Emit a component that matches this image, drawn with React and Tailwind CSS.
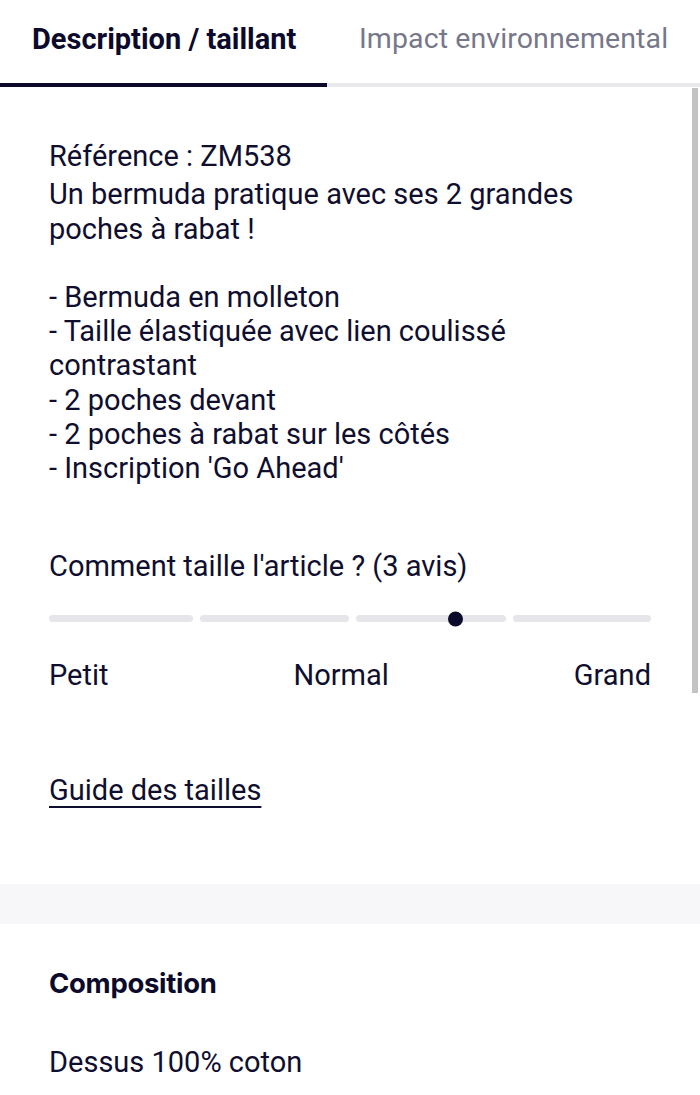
import React from 'react';

const lines = [
  '- Bermuda en molleton',
  '- Taille élastiquée avec lien coulissé contrastant',
  '- 2 poches devant',
  '- 2 poches à rabat sur les côtés',
  "- Inscription 'Go Ahead'",
];

function Slider() {
  return (
    <div className="relative mt-[32px] flex h-[8px] items-center gap-[7px]">
      <div className="h-[7px] w-[144px] rounded-full bg-[#e6e6ea]" />
      <div className="h-[7px] w-[149px] rounded-full bg-[#e6e6ea]" />
      <div className="h-[7px] w-[150px] rounded-full bg-[#e6e6ea]" />
      <div className="h-[7px] flex-1 rounded-full bg-[#e6e6ea]" />
      <span className="absolute left-[399px] top-1/2 h-[15px] w-[15px] -translate-y-1/2 rounded-full bg-[#0b0a2b]" />
    </div>
  );
}

export default function App() {
  return (
    <div className="relative h-[1095px] w-[700px] overflow-hidden bg-white font-['Roboto',sans-serif] text-[#0f0e2e]">
      {/* Tabs */}
      <div className="flex h-[83px] items-start pt-[20px] leading-[38px]">
        <div className="w-[327px] pl-[32px] text-[29px] font-bold text-[#0b0a2b]">
          Description / taillant
        </div>
        <div className="pl-[32px] text-[28.5px] tracking-[0.1px] text-[#77778a]">
          Impact environnemental
        </div>
      </div>
      <div className="flex h-[4px]">
        <div className="w-[327px] bg-[#0b0a2b]" />
        <div className="flex-1 bg-[#e9e9ec]" />
      </div>

      {/* scrollbar */}
      <div className="absolute left-[692px] top-[88px] h-[605px] w-[6px] bg-[#c3c3c3]" />

      <div className="px-[49px] pt-[52px] text-[29px] leading-[34.3px]">
        <p>Référence : ZM538</p>
        <p className="mt-[4px]">Un bermuda pratique avec ses 2 grandes poches à rabat !</p>
        <div className="mt-[34px]">
          {lines.map(l => (
            <p key={l}>{l}</p>
          ))}
        </div>

        <p className="mt-[63px]">Comment taille l'article ? (3 avis)</p>
        <Slider />
        <div className="mt-[35px] flex justify-between">
          <span>Petit</span>
          <span>Normal</span>
          <span>Grand</span>
        </div>

        <a href="#" className="mt-[81px] block w-fit underline decoration-[2px] underline-offset-[6px]">
          Guide des tailles
        </a>
      </div>

      <div className="mt-[76px] h-[40px] bg-[#f7f7f9]" />

      <div className="px-[49px] pt-[42px] text-[29px] leading-[34px]">
        <h3 className="font-['Inter',sans-serif] text-[27.5px] font-bold tracking-[-0.3px] text-[#0b0a2b]">
          Composition
        </h3>
        <p className="mt-[45px]">Dessus 100% coton</p>
      </div>
    </div>
  );
}
